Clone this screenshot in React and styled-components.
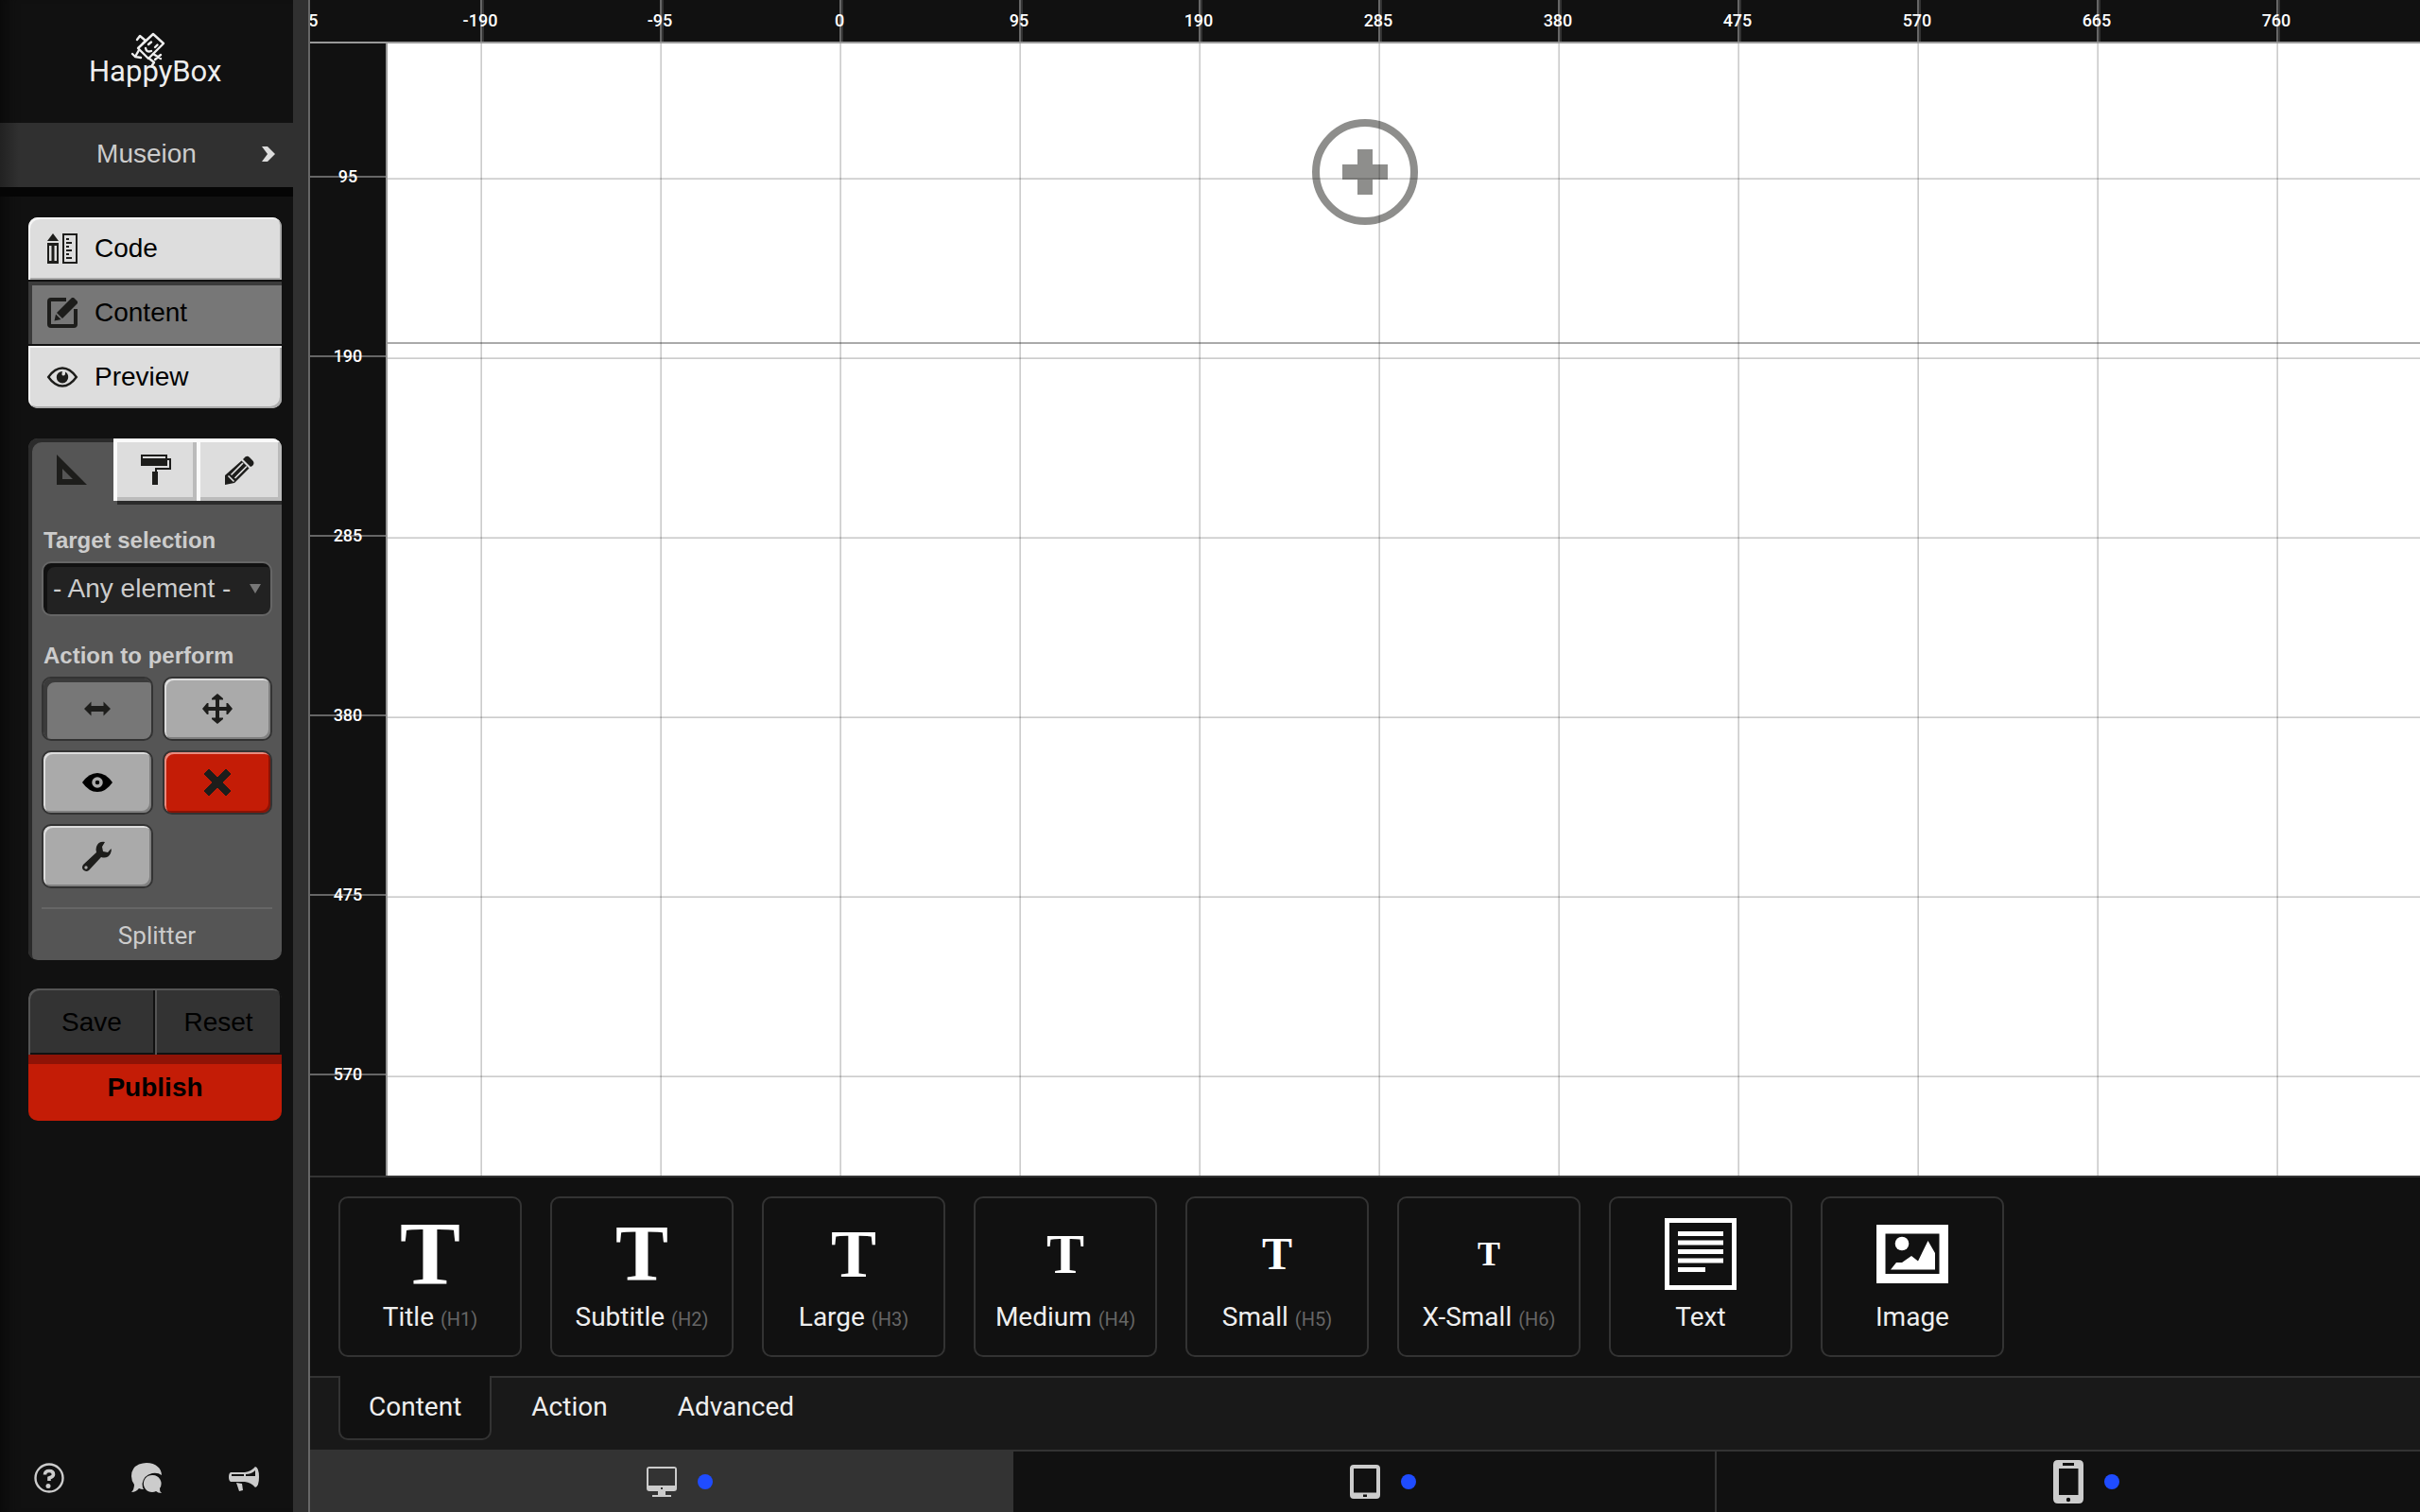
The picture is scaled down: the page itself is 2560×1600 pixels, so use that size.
import React, { useState } from 'react';
import styled, { createGlobalStyle, css } from 'styled-components';

const sans = '"Liberation Sans", Arial, sans-serif';
const din = 'Roboto, "Liberation Sans", sans-serif';

const GlobalStyle = createGlobalStyle`
  *, *::before, *::after { box-sizing: border-box; }
  html, body, #root { height: 100%; }
  body { margin: 0; background: #111; font-family: ${sans}; font-size: 28px; overflow: hidden; }
  button, select { font: inherit; margin: 0; border: 0; padding: 0; cursor: pointer; }
  h2, p, ul { margin: 0; padding: 0; }
  ul { list-style: none; }
  svg { display: block; flex: none; overflow: visible; }
`;

const Shell = styled.div`
  display: flex;
  height: 100%;
`;

/* ---------- Sidebar ---------- */

const Sidebar = styled.aside`
  display: flex;
  flex-direction: column;
  flex: 0 0 328px;
  border-right: 2px solid #666;
  box-shadow: inset -16px 0 0 #303030, inset 18px 0 14px -12px #0a0a0a;
  padding-right: 16px;
`;

const LogoLink = styled.a`
  display: flex;
  justify-content: center;
  align-items: center;
  height: 130px;
  padding-left: 22px;
  text-decoration: none;
`;

const SiteButton = styled.button`
  display: grid;
  grid-template-columns: 34px 1fr 34px;
  align-items: center;
  height: 68px;
  flex: none;
  padding-bottom: 2px;
  background: linear-gradient(90deg, #222 0, #303030 20px);
  color: #ccc;
  box-shadow: 0 10px 0 #050505;
`;

const SideBody = styled.div`
  display: flex;
  flex-direction: column;
  flex: 1;
  gap: 30px;
  padding: 32px 12px 20px 30px;
`;

const ModeGroup = styled.nav`
  display: flex;
  flex-direction: column;
  gap: 2px;
  margin-bottom: 2px;
`;

const ModeButton = styled.button`
  display: flex;
  align-items: center;
  gap: 18px;
  height: 66px;
  padding-left: 20px;
  color: #000;
  background: ${(p) => (p.$active ? '#777' : '#ddd')};
  box-shadow: ${(p) =>
    p.$active
      ? 'inset 4px 4px 0 #3b3b3b'
      : 'inset 2px 2px 0 #f4f4f4, inset -2px -2px 0 #aaa'};
  &:first-child { border-radius: 10px 10px 0 0; }
  &:last-child { border-radius: 0 0 10px 10px; }
`;

const Panel = styled.section`
  border-radius: 10px;
  background: #555;
  box-shadow: inset 4px 4px 0 #2b2b2b;
  overflow: hidden;
`;

const ToolTabs = styled.div`
  display: grid;
  grid-template-columns: 90px 88px 90px;
  height: 66px;
`;

const ToolTab = styled.button`
  display: flex;
  justify-content: center;
  align-items: center;
  padding-left: 2px;
  background: transparent;
  ${(p) =>
    !p.$active &&
    css`
      background: #ddd;
      box-shadow: inset 4px 4px 0 #fafafa, inset -4px -4px 0 #bbb, 4px 4px 0 #2b2b2b;
    `}
`;

const PanelBody = styled.div`
  display: flex;
  flex-direction: column;
  padding: 26px 10px 0 14px;
`;

const FieldTitle = styled.label`
  padding-left: 2px;
  color: #ccc;
  font-weight: 700;
  font-size: 24px;
  line-height: 32px;
`;

const SelectWrap = styled.div`
  display: grid;
  align-items: center;
  margin: 6px 0 26px;
  > * { grid-area: 1 / 1; }
  > svg { justify-self: end; margin-right: 12px; pointer-events: none; }
`;

const Select = styled.select`
  appearance: none;
  width: 100%;
  height: 58px;
  padding: 0 10px 2px;
  border: 2px solid #666;
  border-radius: 10px;
  background: #222;
  box-shadow: inset 4px 4px 0 #111;
  color: #ccc;
`;

const ActionGrid = styled.div`
  display: grid;
  grid-template-columns: 118px 116px;
  grid-auto-rows: 68px;
  gap: 10px;
  margin-top: 6px;
`;

const ActionButton = styled.button`
  display: flex;
  justify-content: center;
  align-items: center;
  border: 2px solid #333;
  border-radius: 10px;
  background: ${(p) => (p.$danger ? '#c41c06' : p.$active ? '#777' : '#aaa')};
  box-shadow: ${(p) =>
    p.$active
      ? 'inset 4px 4px 0 #3b3b3b'
      : p.$danger
        ? 'inset 2px 2px 0 #e98a7d, inset -2px -2px 0 #8c1305'
        : 'inset 2px 2px 0 #ddd, inset -2px -2px 0 #808080'};
`;

const PanelFooter = styled.p`
  margin-top: 20px;
  border-top: 2px solid #666;
  padding: 12px 0 10px;
  color: #ccc;
  font-family: ${din};
  font-size: 26px;
  line-height: 32px;
  text-align: center;
`;

const SaveGroup = styled.div`
  display: grid;
  grid-template-columns: 1fr 1fr;
  grid-auto-rows: 70px;
  border-radius: 10px;
  overflow: hidden;
`;

const DisabledButton = styled.button`
  background: #333;
  color: #000;
  padding-top: 2px;
  box-shadow: inset 2px 2px 0 #555, inset -2px -2px 0 #111;
  &:first-child { border-top-left-radius: 10px; }
  &:nth-child(2) { border-top-right-radius: 10px; }
`;

const PublishButton = styled.button`
  grid-column: 1 / -1;
  background: #c41c06;
  color: #000;
  font-weight: 700;
  box-shadow: inset 0 10px 0 #8f1306;
`;

const HelpRow = styled.nav`
  display: flex;
  justify-content: space-between;
  margin-top: auto;
  padding: 0 24px 0 6px;
`;

const HelpLink = styled.a`
  color: #ccc;
`;

/* ---------- Workspace ---------- */

const Workspace = styled.main`
  display: flex;
  flex-direction: column;
  flex: 1;
  min-width: 0;
`;

const Stage = styled.div`
  display: grid;
  grid-template: 46px minmax(0, 1fr) / 82px minmax(0, 1fr);
  flex: 1;
  min-height: 0;
  overflow: hidden;
  background: #fff;
`;

const PageSection = styled.section`
  grid-area: 1 / 1 / 3 / 3;
  align-self: start;
  display: flex;
  justify-content: center;
  padding: 126px 0 124px;
  border-bottom: 2px solid #aaa;
`;

const AddButton = styled.button`
  background: none;
  border-radius: 50%;
`;

const Grid = styled.div`
  grid-area: 2 / 2;
  pointer-events: none;
  background-image:
    linear-gradient(90deg, rgba(0, 0, 0, 0.13) 1px, rgba(0, 0, 0, 0.2) 1px 2px, transparent 2px),
    linear-gradient(rgba(0, 0, 0, 0.13) 1px, rgba(0, 0, 0, 0.2) 1px 2px, transparent 2px);
  background-size: 190px 190px;
  background-position: 98px 142px;
`;

const TopRuler = styled.div`
  grid-area: 1 / 1 / 2 / 3;
  border-bottom: 2px solid #999;
  background: #111;
  overflow: hidden;
`;

const LeftRuler = styled.div`
  grid-area: 2 / 1;
  border-right: 2px solid #999;
  background: #111;
  overflow: hidden;
`;

const Marks = styled.ul`
  display: flex;
  flex-direction: ${(p) => (p.$vertical ? 'column' : 'row')};
  margin: ${(p) => (p.$vertical ? '46px 0 0' : '0 0 0 -104px')};
`;

const Mark = styled.li`
  display: flex;
  flex: none;
  justify-content: center;
  align-items: center;
  color: #fff;
  font: 500 18px/20px ${din};
  ${(p) =>
    p.$vertical
      ? css`
          height: 190px;
          background: linear-gradient(#666, #666) 0 94px / 100% 2px no-repeat;
        `
      : css`
          width: 190px;
          height: 44px;
          padding-right: 2px;
          background: linear-gradient(90deg, #666 2px, #333 2px) 94px 0 / 4px 100% no-repeat;
        `}
`;

/* ---------- Block palette ---------- */

const Palette = styled.div`
  display: flex;
  gap: 30px;
  padding: 20px 30px;
  border-top: 2px solid #333;
  background: #111;
`;

const Block = styled.button`
  display: flex;
  flex-direction: column;
  align-items: center;
  width: 194px;
  height: 170px;
  padding-top: 20px;
  border: 2px solid #333;
  border-radius: 10px;
  background: transparent;
  color: #eee;
  font: 400 28px/32px ${din};
`;

const BlockIcon = styled.span`
  display: flex;
  justify-content: center;
  align-items: center;
  height: 78px;
  margin-bottom: 12px;
`;

const Letter = styled.span`
  color: #fff;
  font: 700 ${(p) => p.$size}px/76px "Liberation Serif", serif;
`;

const Tag = styled.small`
  color: #666;
  font-size: 20px;
`;

const PaletteTabs = styled.div`
  display: flex;
  align-items: flex-start;
  gap: 10px;
  height: 78px;
  padding: 0 30px;
  background: linear-gradient(#333 2px, #191919 2px);
`;

const PaletteTab = styled.button`
  height: 68px;
  padding: 0 30px;
  border: 2px solid transparent;
  border-top: 0;
  border-radius: 0 0 10px 10px;
  background: transparent;
  color: #eee;
  font: 400 28px/32px ${din};
  ${(p) =>
    p.$active &&
    css`
      border-color: #333;
      background: #111;
    `}
`;

const DeviceBar = styled.div`
  display: grid;
  grid-template-columns: repeat(3, 1fr);
  height: 66px;
  border-top: 2px solid #333;
`;

const Device = styled.button`
  display: grid;
  grid-template-columns: 1fr auto 1fr;
  align-items: center;
  column-gap: 22px;
  background: ${(p) => (p.$active ? '#333' : '#111')};
  &:not(:last-child) { box-shadow: inset -2px 0 0 #333; }
  > svg { grid-column: 2; }
`;

const Dot = styled.i`
  width: 16px;
  height: 16px;
  border-radius: 50%;
  background: #1f4cff;
`;

/* ---------- Drawings ---------- */

const Icon = ({ w = 32, h = 32, box = `0 0 ${w} ${h}`, children }) => (
  <svg width={w} height={h} viewBox={box} fill="#1d1d1b" aria-hidden="true">
    {children}
  </svg>
);

const Logo = () => (
  <svg width="144" height="64" viewBox="0 0 144 64" aria-label="HappyBox" role="img">
    <g fill="none" stroke="#eee" strokeWidth="2.400" strokeLinejoin="round" strokeLinecap="round">
      <path d="M68 3 79 13 63 29 52 18Z" />
      <path d="M60 10 54 5 51 9M57 13 60 10" />
      <path d="M53 20 49 27 46 24M49 27 55 28" />
      <path d="M68 24 76 29M70 30 76 25" />
      <path d="M64 29 69 33 67 36" />
      <path d="M60 18Q61 23 66 21" />
      <path d="M63 14 66 11.500M70 17 72.500 14.500" />
    </g>
    <text x="0" y="53" fill="#eee" fontFamily={din} fontWeight="400" fontSize="31">
      HappyBox
    </text>
  </svg>
);

const icons = {
  code: (
    <Icon>
      <path d="M6 0 12 8H0ZM0 10H12V32H0ZM2 13V29H4.500V13ZM7.500 13V29H10V13Z" fillRule="evenodd" />
      <path d="M16 0H32V32H16ZM18 2V30H30V2Z" fillRule="evenodd" />
      <path d="M20 5h3v2h-3zM20 9h6v2h-6zM20 13h3v2h-3zM20 17h6v2h-6zM20 21h3v2h-3zM20 25h6v2h-6z" />
    </Icon>
  ),
  content: (
    <Icon>
      <path d="M20 2H4Q2 2 2 4V28Q2 30 4 30H28Q30 30 30 28V12" fill="none" stroke="#1d1d1b" strokeWidth="4" />
      <path d="M26 0H28L32 4V6L16 22 10 16ZM9 17.500 14.500 23 7.500 24.500Z" />
    </Icon>
  ),
  preview: (
    <Icon>
      <path d="M1.200 16Q8 6.500 16 6.500T30.800 16Q24 25.500 16 25.500T1.200 16Z" fill="none" stroke="#1d1d1b" strokeWidth="2.400" />
      <path d="M16 10A6.200 6.200 0 1 0 22.200 16 6.200 6.200 0 0 0 19 10.600Q19.500 14.500 17 14.500 14.500 14.500 16 10Z" />
    </Icon>
  ),
  square: (
    <Icon>
      <path d="M0 0 32 32H0ZM6 15V26H17Z" fillRule="evenodd" />
    </Icon>
  ),
  roller: (
    <Icon>
      <path d="M0 0H28V4H32V16H17V18H18V32H12V18H15V14H30V6H28V12H0ZM2 2V4H26V2Z" fillRule="evenodd" />
    </Icon>
  ),
  pencil: (
    <Icon>
      <path d="M20 4Q23 0 26 3L29 6Q32 9 29 12L27 13 19 5ZM17.500 6.500 25.500 14.500 10 30 0 32 0 22Z" />
      <path d="M3.500 22.500 9.500 28.500M6.500 21.500 19 9M10.500 25 23 12.500" stroke="#ddd" strokeWidth="1.600" fill="none" />
    </Icon>
  ),
  resize: (
    <Icon>
      <path d="M2 16 9.500 8.500V13H22.500V8.500L30 16 22.500 23.500V19H9.500V23.500Z" />
    </Icon>
  ),
  move: (
    <Icon>
      <path d="M16 0 22 5V6.500H18V14H25.500V10H27L32 16 27 22H25.500V18H18V25.500H22V27L16 32 10 27V25.500H14V18H6.500V22H5L0 16 5 10H6.500V14H14V6.500H10V5Z" />
    </Icon>
  ),
  eye: (
    <Icon>
      <path d="M0 16Q7 6 16 6T32 16Q25 26 16 26T0 16Z" fill="#000" />
      <circle cx="16" cy="16" r="4" fill="none" stroke="#aaa" strokeWidth="3.500" />
    </Icon>
  ),
  remove: (
    <Icon>
      <path d="M7 2 16 11 25 2 30 7 21 16 30 25 25 30 16 21 7 30 2 25 11 16 2 7Z" stroke="#1d1d1b" strokeLinejoin="round" />
    </Icon>
  ),
  wrench: (
    <Icon>
      <path d="M24 1Q17 0 15 6 14 9 15 12L1 25Q-1 28 1 30.500 4 33 7 31L20 17Q27 19 30 13 31.500 10 30.500 8L27 12 22 11 21 6Z" />
      <circle cx="4" cy="28" r="1.700" fill="#aaa" />
    </Icon>
  ),
  help: (
    <Icon>
      <circle cx="16" cy="16" r="14.500" fill="none" stroke="#ccc" strokeWidth="2.400" />
      <path d="M11.500 12.500Q11.500 8.500 16 8.500T20.500 12.200Q20.500 14.500 16 16V19" fill="none" stroke="#ccc" strokeWidth="3.600" />
      <circle cx="15" cy="24.500" r="2.500" fill="#ccc" />
    </Icon>
  ),
  chat: (
    <Icon>
      <path d="M16 0C26 0 32 6 32 13Q28 10 22 11 13 13 11.500 22 11.500 26 13 28 10 28 8 27 5 31 0 31 3 28 3 23 0 19 0 14 0 5 8 1.500 12 0 16 0Z" fill="#ccc" />
      <path d="M22 13A9 9 0 1 0 26 30Q28 32 32 32 29.500 30 30 27A9 9 0 0 0 22 13Z" fill="#ccc" />
    </Icon>
  ),
  megaphone: (
    <Icon>
      <path d="M2 10H17Q24 9 28 4 32 5 32 15T28 26Q24 21 17 20H2Q0 19 0 15T2 10ZM3 12V14H16V12ZM18 12V14H28V8Q24 12 18 12Z" fill="#ccc" fillRule="evenodd" />
      <path d="M8 21 14 22 15 29 11 30Z" fill="#ccc" />
    </Icon>
  ),
  desktop: (
    <Icon>
      <path d="M3 0H29Q32 0 32 3V23Q32 26 29 26H20V30H26V32H6V30H12V26H3Q0 26 0 23V3Q0 0 3 0ZM2 2V20H30V2ZM15 22V24H17V22Z" fill="#ccc" fillRule="evenodd" />
    </Icon>
  ),
  tablet: (
    <Icon h={36}>
      <path d="M4 0H28Q32 0 32 4V32Q32 36 28 36H4Q0 36 0 32V4Q0 0 4 0ZM4 4V29.500H28V4ZM14 31.500V34H18V31.500Z" fill="#ccc" fillRule="evenodd" />
    </Icon>
  ),
  phone: (
    <Icon h={46}>
      <path d="M5 0H27Q32 0 32 5V41Q32 46 27 46H5Q0 46 0 41V5Q0 0 5 0ZM6 9V37H26.500V9ZM10 3V6H22V3Z" fill="#ccc" fillRule="evenodd" />
      <circle cx="16" cy="42" r="2.200" fill="#111" />
    </Icon>
  ),
  text: (
    <Icon w={76} h={76}>
      <path d="M0 0H76V76H0ZM5 5V71H71V5Z" fill="#fff" fillRule="evenodd" />
      <path d="M14 14h48v5H14zM14 23.500h48v5H14zM14 33h48v5H14zM14 42.500h48v5H14zM14 52h29v5H14z" fill="#fff" />
    </Icon>
  ),
  image: (
    <Icon w={76} h={62}>
      <path d="M0 0H76V62H0ZM9.500 9.500V52H66.500V9.500Z" fill="#fff" fillRule="evenodd" />
      <circle cx="27" cy="20" r="7.300" fill="#fff" />
      <path d="M15 47.500 21 40 27 40 37 33 44 38.500 54.500 17 62 30V47.500Z" fill="#fff" />
    </Icon>
  ),
};

const modes = [
  ['Code', 'code'],
  ['Content', 'content'],
  ['Preview', 'preview'],
];

const tools = [
  ['Layout', 'square'],
  ['Paint', 'roller'],
  ['Edit', 'pencil'],
];

const actions = [
  ['Resize', 'resize'],
  ['Move', 'move'],
  ['Visibility', 'eye'],
  ['Delete', 'remove'],
  ['Configure', 'wrench'],
];

const headings = [
  ['Title', 'H1', 96],
  ['Subtitle', 'H2', 84],
  ['Large', 'H3', 72],
  ['Medium', 'H4', 60],
  ['Small', 'H5', 48],
  ['X-Small', 'H6', 36],
];

const xMarks = [-285, -190, -95, 0, 95, 190, 285, 380, 475, 570, 665, 760];
const yMarks = [95, 190, 285, 380, 475, 570];

export default function App() {
  const [mode, setMode] = useState('Content');
  const [tool, setTool] = useState('Layout');
  const [action, setAction] = useState('Resize');
  const [tab, setTab] = useState('Content');
  const [device, setDevice] = useState('desktop');

  return (
    <>
      <GlobalStyle />
      <Shell>
        <Sidebar>
          <LogoLink href="#home">
            <Logo />
          </LogoLink>
          <SiteButton>
            <span />
            <span>Museion</span>
            <Icon w={16} h={18}>
              <path d="M1 1H7L15 9 7 17H1L7 9Z" fill="#ddd" />
            </Icon>
          </SiteButton>
          <SideBody>
            <ModeGroup>
              {modes.map(([name, icon]) => (
                <ModeButton key={name} $active={mode === name} onClick={() => setMode(name)}>
                  {icons[icon]}
                  {name}
                </ModeButton>
              ))}
            </ModeGroup>

            <Panel>
              <ToolTabs>
                {tools.map(([name, icon]) => (
                  <ToolTab key={name} aria-label={name} $active={tool === name} onClick={() => setTool(name)}>
                    {icons[icon]}
                  </ToolTab>
                ))}
              </ToolTabs>
              <PanelBody>
                <FieldTitle htmlFor="target">Target selection</FieldTitle>
                <SelectWrap>
                  <Select id="target" defaultValue="any">
                    <option value="any">- Any element -</option>
                  </Select>
                  <Icon w={12} h={10}>
                    <path d="M0 0H12L6 10Z" fill="#777" />
                  </Icon>
                </SelectWrap>
                <FieldTitle as="h2">Action to perform</FieldTitle>
                <ActionGrid>
                  {actions.map(([name, icon]) => (
                    <ActionButton
                      key={name}
                      aria-label={name}
                      $active={action === name}
                      $danger={name === 'Delete'}
                      onClick={() => setAction(name)}
                    >
                      {icons[icon]}
                    </ActionButton>
                  ))}
                </ActionGrid>
                <PanelFooter>Splitter</PanelFooter>
              </PanelBody>
            </Panel>

            <SaveGroup>
              <DisabledButton>Save</DisabledButton>
              <DisabledButton>Reset</DisabledButton>
              <PublishButton>Publish</PublishButton>
            </SaveGroup>

            <HelpRow>
              <HelpLink href="#help" aria-label="Help">{icons.help}</HelpLink>
              <HelpLink href="#chat" aria-label="Chat">{icons.chat}</HelpLink>
              <HelpLink href="#news" aria-label="News">{icons.megaphone}</HelpLink>
            </HelpRow>
          </SideBody>
        </Sidebar>

        <Workspace>
          <Stage>
            <PageSection>
              <AddButton aria-label="Add block">
                <Icon w={112} h={112}>
                  <circle cx="56" cy="56" r="52" fill="none" stroke="#8e8e8c" strokeWidth="8" />
                  <path d="M48 32H64V48H80V64H64V80H48V64H32V48H48Z" fill="#8e8e8c" />
                </Icon>
              </AddButton>
            </PageSection>
            <Grid />
            <TopRuler>
              <Marks>
                {xMarks.map((n) => (
                  <Mark key={n}>{n}</Mark>
                ))}
              </Marks>
            </TopRuler>
            <LeftRuler>
              <Marks $vertical>
                {yMarks.map((n) => (
                  <Mark key={n} $vertical>{n}</Mark>
                ))}
              </Marks>
            </LeftRuler>
          </Stage>

          <Palette>
            {headings.map(([name, tag, size]) => (
              <Block key={tag}>
                <BlockIcon>
                  <Letter $size={size}>T</Letter>
                </BlockIcon>
                <span>
                  {name} <Tag>({tag})</Tag>
                </span>
              </Block>
            ))}
            <Block>
              <BlockIcon>{icons.text}</BlockIcon>
              <span>Text</span>
            </Block>
            <Block>
              <BlockIcon>{icons.image}</BlockIcon>
              <span>Image</span>
            </Block>
          </Palette>

          <PaletteTabs>
            {['Content', 'Action', 'Advanced'].map((name) => (
              <PaletteTab key={name} $active={tab === name} onClick={() => setTab(name)}>
                {name}
              </PaletteTab>
            ))}
          </PaletteTabs>

          <DeviceBar>
            {['desktop', 'tablet', 'phone'].map((name) => (
              <Device key={name} aria-label={name} $active={device === name} onClick={() => setDevice(name)}>
                {icons[name]}
                <Dot />
              </Device>
            ))}
          </DeviceBar>
        </Workspace>
      </Shell>
    </>
  );
}
